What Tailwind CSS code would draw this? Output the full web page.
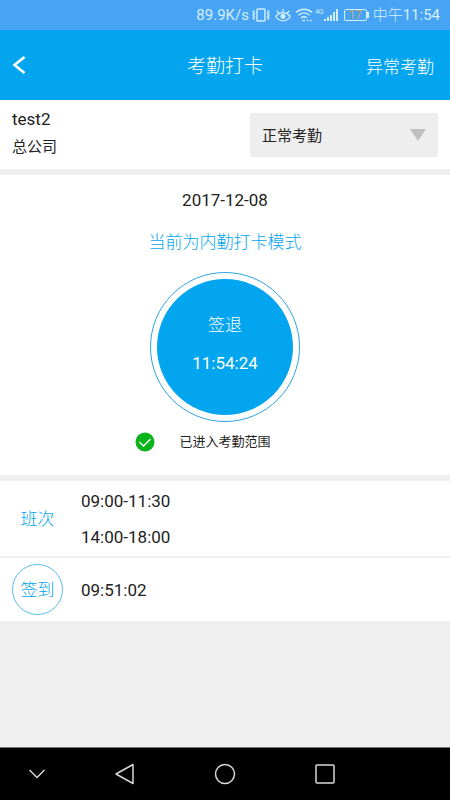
<!DOCTYPE html>
<html lang="zh-CN">
<head>
<meta charset="UTF-8">
<meta name="viewport" content="width=device-width, initial-scale=1">
<title>考勤打卡</title>
<script src="https://cdn.jsdelivr.net/npm/@tailwindcss/browser@4"></script>
</head>
<body class="flex min-h-screen flex-col bg-[#efefef] font-[Roboto,'Noto_Sans_CJK_SC',sans-serif] text-[17px] leading-6 text-[#222]">

<!-- Status bar -->
<div class="flex h-[30px] items-center justify-end bg-[#47a3f3] pr-2.5 text-[15px] text-[#d3f0ff]">
  <span>89.9K/s</span>
  <svg class="ml-0.5 h-4 w-5" viewBox="0 0 20 16" fill="none" stroke="currentColor" stroke-width="1.4" aria-hidden="true">
    <rect x="6" y="2" width="8" height="12" rx="0.8"/>
    <path d="M3.500 3.500L2 5l1.500 1.500L2 8l1.500 1.500L2 11l1.500 1.500M16.500 3.500L18 5l-1.500 1.500L18 8l-1.500 1.500L18 11l-1.500 1.500"/>
  </svg>
  <svg class="ml-1 h-4 w-4" viewBox="0 0 16 16" fill="none" stroke="currentColor" stroke-width="1.3" aria-hidden="true">
    <path d="M0.800 9.500C4.500 4.300 11.500 4.300 15.200 9.500C11.500 15.300 4.500 15.300 0.800 9.500z"/>
    <circle cx="8" cy="9.300" r="1.900" fill="currentColor"/>
    <path d="M8 5V2M3.800 6L1.800 3.800M12.200 6L14.200 3.800"/>
  </svg>
  <svg class="ml-1 h-4 w-[18px]" viewBox="0 0 18 16" fill="none" stroke="currentColor" stroke-width="1.5" aria-hidden="true">
    <path d="M1 5.500C5.500 1.200 12.500 1.200 17 5.500M3.500 8.300C6.800 5.200 11.200 5.200 14.500 8.300M6 11C8 9.200 10 9.200 12 11"/>
    <path d="M7.500 13.500h2.500M12 13.500h1.500M15 13.500h1.500"/>
  </svg>
  <span class="ml-0.5 self-start pt-2 text-[7px] leading-2">4G</span>
  <svg class="h-4 w-4" viewBox="0 0 16 16" fill="currentColor" aria-hidden="true">
    <path d="M0 12h2v2H0zM3 10h2v4H3zM6 8h2v6H6zM9 5h2v9H9zM12 2h2v12h-2z"/>
  </svg>
  <span class="ml-1 flex h-3 w-[23px] items-center justify-center rounded-xs border border-current text-[12px] leading-3 text-[#d3f0ff]"><span class="text-[#c8a565]">17</span></span>
  <span class="h-1.5 w-0.5 bg-[#d3f0ff]"></span>
  <span class="ml-1"><span class="font-light">中午</span>11:54</span>
</div>

<!-- Title bar -->
<header class="grid h-[70px] grid-cols-[1fr_auto_1fr] items-center bg-[#03a5ef] text-white">
  <button type="button" aria-label="返回" class="flex h-11 w-11 items-center pl-3">
    <svg class="h-5 w-4" viewBox="0 0 16 20" fill="none" stroke="currentColor" stroke-width="2.600" aria-hidden="true"><path d="M12.500 2L2.500 10l10 8"/></svg>
  </button>
  <h1 class="pt-1 text-[19px] font-light">考勤打卡</h1>
  <a href="#" class="justify-self-end pt-1 pr-4 font-light">异常考勤</a>
</header>

<main class="flex flex-1 flex-col">
  <!-- Employee and attendance type -->
  <section class="flex h-[69px] items-center justify-between bg-white px-3">
    <div class="pb-1">
      <p class="leading-7">test2</p>
      <p class="text-[15px] leading-7">总公司</p>
    </div>
    <div class="relative">
      <select aria-label="考勤类型" class="h-11 w-[188px] appearance-none rounded-xs bg-[#eee] px-3 pt-0.5 text-[15px]">
        <option>正常考勤</option>
      </select>
      <svg class="pointer-events-none absolute top-4 right-3 h-3 w-4" viewBox="0 0 16 12" fill="#bfbfbf" aria-hidden="true"><path d="M0 0h16L8 12z"/></svg>
    </div>
  </section>

  <!-- Clock in / out -->
  <section class="mt-1.5 flex h-[300px] flex-col items-center bg-white pt-[13px]">
    <p>2017-12-08</p>
    <p class="mt-[18px] font-light text-[#03a5ef]">当前为内勤打卡模式</p>
    <div class="mt-[18px] rounded-full border border-[#2ba3e6] p-1.5">
      <button type="button" class="flex h-[136px] w-[136px] flex-col items-center justify-center gap-3.5 rounded-full bg-[#03a5ef] pb-1.5 text-white">
        <span class="font-light">签退</span>
        <span>11:54:24</span>
      </button>
    </div>
    <div class="mt-2 flex items-center gap-6 pr-11 text-[13px]">
      <svg class="h-5 w-5" viewBox="0 0 20 20" aria-hidden="true"><circle cx="10" cy="10" r="9.500" fill="#0bb41c"/><path d="M4.500 10l4 4 7-7" fill="none" stroke="#fff" stroke-width="1.300"/></svg>
      <span>已进入考勤范围</span>
    </div>
  </section>

  <!-- Shifts -->
  <section class="mt-1.5 flex h-[75px] items-center bg-white">
    <h2 class="w-[75px] text-center font-light text-[#03a5ef]">班次</h2>
    <ul class="flex flex-col gap-3 pl-1.5">
      <li>09:00-11:30</li>
      <li>14:00-18:00</li>
    </ul>
  </section>

  <!-- Recorded sign-in -->
  <section class="mt-0.5 flex h-[63px] items-center bg-white">
    <div class="flex w-[75px] justify-center">
      <span class="flex h-[51px] w-[51px] items-center justify-center rounded-full border border-[#5bbcee] font-light text-[#03a5ef]">签到</span>
    </div>
    <p class="pl-1.5">09:51:02</p>
  </section>
</main>

<!-- System navigation -->
<nav class="flex h-[53px] items-center border-t border-[#777] bg-black text-[#d8d8d8]">
  <button type="button" aria-label="收起导航栏" class="flex w-1/6 justify-center">
    <svg class="h-6 w-6" viewBox="0 0 24 24" fill="none" stroke="currentColor" stroke-width="1.500"><path d="M4.500 8l7.500 7.500L19.500 8"/></svg>
  </button>
  <button type="button" aria-label="后退" class="flex w-2/9 justify-center">
    <svg class="h-6 w-6" viewBox="0 0 24 24" fill="none" stroke="currentColor" stroke-width="1.500" stroke-linejoin="round"><path d="M20 2.500v19L3 12z"/></svg>
  </button>
  <button type="button" aria-label="主屏幕" class="flex w-2/9 justify-center">
    <svg class="h-6 w-6" viewBox="0 0 24 24" fill="none" stroke="currentColor" stroke-width="1.500"><circle cx="12" cy="12" r="9.500"/></svg>
  </button>
  <button type="button" aria-label="最近任务" class="flex w-2/9 justify-center">
    <svg class="h-6 w-6" viewBox="0 0 24 24" fill="none" stroke="currentColor" stroke-width="1.500"><rect x="3" y="3" width="18" height="18" rx="1"/></svg>
  </button>
</nav>
</body>
</html>
